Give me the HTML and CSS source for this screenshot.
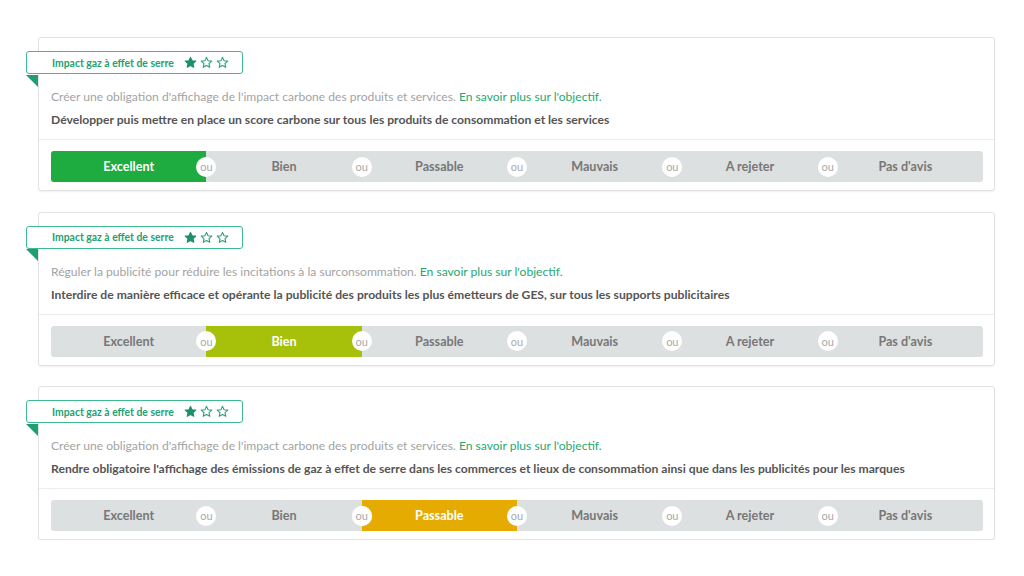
FILE: index.html
```html
<!DOCTYPE html>
<html lang="fr">
<head>
<meta charset="utf-8">
<link rel="stylesheet" href="styles.css">
</head>
<body>
<div class="list">

  <div class="card">
    <div class="badge">Impact gaz à effet de serre
      <span class="stars">
        <svg viewBox="0 0 24 24" class="star full"><path d="M12 2.5l2.9 6.3 6.9.7-5.2 4.6 1.5 6.8L12 17.4l-6.1 3.5 1.5-6.8-5.2-4.6 6.9-.7z"/></svg>
        <svg viewBox="0 0 24 24" class="star"><path d="M12 2.5l2.9 6.3 6.9.7-5.2 4.6 1.5 6.8L12 17.4l-6.1 3.5 1.5-6.8-5.2-4.6 6.9-.7z"/></svg>
        <svg viewBox="0 0 24 24" class="star"><path d="M12 2.5l2.9 6.3 6.9.7-5.2 4.6 1.5 6.8L12 17.4l-6.1 3.5 1.5-6.8-5.2-4.6 6.9-.7z"/></svg>
      </span>
    </div>
    <div class="head">
      <p class="desc">Créer une obligation d'affichage de l'impact carbone des produits et services. <a class="link">En savoir plus sur l'objectif.</a></p>
      <p class="title">Développer puis mettre en place un score carbone sur tous les produits de consommation et les services</p>
    </div>
    <div class="vote">
      <div class="bar">
        <div class="seg sel-excellent">Excellent<span class="ou">ou</span></div>
        <div class="seg">Bien<span class="ou">ou</span></div>
        <div class="seg">Passable<span class="ou">ou</span></div>
        <div class="seg">Mauvais<span class="ou">ou</span></div>
        <div class="seg">A rejeter<span class="ou">ou</span></div>
        <div class="seg">Pas d'avis</div>
      </div>
    </div>
  </div>

  <div class="card">
    <div class="badge">Impact gaz à effet de serre
      <span class="stars">
        <svg viewBox="0 0 24 24" class="star full"><path d="M12 2.5l2.9 6.3 6.9.7-5.2 4.6 1.5 6.8L12 17.4l-6.1 3.5 1.5-6.8-5.2-4.6 6.9-.7z"/></svg>
        <svg viewBox="0 0 24 24" class="star"><path d="M12 2.5l2.9 6.3 6.9.7-5.2 4.6 1.5 6.8L12 17.4l-6.1 3.5 1.5-6.8-5.2-4.6 6.9-.7z"/></svg>
        <svg viewBox="0 0 24 24" class="star"><path d="M12 2.5l2.9 6.3 6.9.7-5.2 4.6 1.5 6.8L12 17.4l-6.1 3.5 1.5-6.8-5.2-4.6 6.9-.7z"/></svg>
      </span>
    </div>
    <div class="head">
      <p class="desc">Réguler la publicité pour réduire les incitations à la surconsommation. <a class="link">En savoir plus sur l'objectif.</a></p>
      <p class="title">Interdire de manière efficace et opérante la publicité des produits les plus émetteurs de GES, sur tous les supports publicitaires</p>
    </div>
    <div class="vote">
      <div class="bar">
        <div class="seg">Excellent<span class="ou">ou</span></div>
        <div class="seg sel-bien">Bien<span class="ou">ou</span></div>
        <div class="seg">Passable<span class="ou">ou</span></div>
        <div class="seg">Mauvais<span class="ou">ou</span></div>
        <div class="seg">A rejeter<span class="ou">ou</span></div>
        <div class="seg">Pas d'avis</div>
      </div>
    </div>
  </div>

  <div class="card">
    <div class="badge">Impact gaz à effet de serre
      <span class="stars">
        <svg viewBox="0 0 24 24" class="star full"><path d="M12 2.5l2.9 6.3 6.9.7-5.2 4.6 1.5 6.8L12 17.4l-6.1 3.5 1.5-6.8-5.2-4.6 6.9-.7z"/></svg>
        <svg viewBox="0 0 24 24" class="star"><path d="M12 2.5l2.9 6.3 6.9.7-5.2 4.6 1.5 6.8L12 17.4l-6.1 3.5 1.5-6.8-5.2-4.6 6.9-.7z"/></svg>
        <svg viewBox="0 0 24 24" class="star"><path d="M12 2.5l2.9 6.3 6.9.7-5.2 4.6 1.5 6.8L12 17.4l-6.1 3.5 1.5-6.8-5.2-4.6 6.9-.7z"/></svg>
      </span>
    </div>
    <div class="head">
      <p class="desc">Créer une obligation d'affichage de l'impact carbone des produits et services. <a class="link">En savoir plus sur l'objectif.</a></p>
      <p class="title">Rendre obligatoire l'affichage des émissions de gaz à effet de serre dans les commerces et lieux de consommation ainsi que dans les publicités pour les marques</p>
    </div>
    <div class="vote">
      <div class="bar">
        <div class="seg">Excellent<span class="ou">ou</span></div>
        <div class="seg">Bien<span class="ou">ou</span></div>
        <div class="seg sel-passable"><span class="ou left">ou</span>Passable<span class="ou">ou</span></div>
        <div class="seg">Mauvais<span class="ou">ou</span></div>
        <div class="seg">A rejeter<span class="ou">ou</span></div>
        <div class="seg">Pas d'avis</div>
      </div>
    </div>
  </div>

</div>
</body>
</html>
```

FILE: styles.css
```css
* { box-sizing: border-box; }
html, body { margin: 0; padding: 0; background: #fff; }
body { font-family: Lato, "Open Sans", sans-serif; }

.list {
  display: flex;
  flex-direction: column;
  gap: 20.5px;
  padding: 37px 0 0 38px;
  width: 995px;
}

.card {
  position: relative;
  border: 1px solid #e2e2e2;
  border-radius: 3px;
  background: #fff;
  box-shadow: 0 1px 2px rgba(0,0,0,0.06);
}

.badge {
  position: absolute;
  left: -13px;
  top: 13px;
  width: 217px;
  height: 23px;
  border: 1.5px solid #3dbb8f;
  border-radius: 3px;
  background: #fff;
  color: #22a173;
  font-size: 10.4px;
  font-weight: 700;
  display: flex;
  align-items: center;
  padding-left: 25px;
  z-index: 2;
}
.badge::after {
  content: "";
  position: absolute;
  left: -1.5px;
  top: 100%;
  margin-top: 1.5px;
  width: 0;
  height: 0;
  border-top: 12px solid #1f9e6f;
  border-left: 12px solid transparent;
}

.stars { display: flex; gap: 3px; margin-left: 10px; }
.star { width: 13px; height: 13px; fill: none; stroke: #2a9f78; stroke-width: 2; stroke-linejoin: round; }
.star.full { fill: #1f8f6a; stroke: #1f8f6a; }

.head {
  padding: 51px 12px 11px 12px;
  border-bottom: 1px solid #ececec;
}
.desc {
  margin: 0 0 7px;
  font-size: 12.1px;
  line-height: 16px;
  color: #a3a3a3;
}
.link { color: #25a872; text-decoration: none; }
.title {
  margin: 0;
  font-size: 12.15px;
  line-height: 16px;
  font-weight: 700;
  color: #555;
}

.vote { padding: 11px 11px 8px 12px; }
.bar {
  display: flex;
  height: 31px;
  background: #dde0e1;
  border-radius: 3px;
}
.seg {
  position: relative;
  flex: 1;
  display: flex;
  align-items: center;
  justify-content: center;
  font-size: 12.6px;
  font-weight: 700;
  color: #777;
}
.seg:first-child { border-radius: 3px 0 0 3px; }
.seg:last-child { border-radius: 0 3px 3px 0; }
.sel-excellent { background: #1eab40; color: #fff; }
.sel-bien { background: #a7c10b; color: #fff; }
.sel-passable { background: #e6ab00; color: #fff; }

.ou {
  position: absolute;
  right: -10px;
  top: 50%;
  margin-top: -10px;
  width: 20px;
  height: 20px;
  border-radius: 50%;
  background: #fff;
  color: #aaa;
  font-size: 11px;
  font-weight: 400;
  display: flex;
  align-items: center;
  justify-content: center;
  z-index: 1;
}
.ou.left { right: auto; left: -10px; }
```
